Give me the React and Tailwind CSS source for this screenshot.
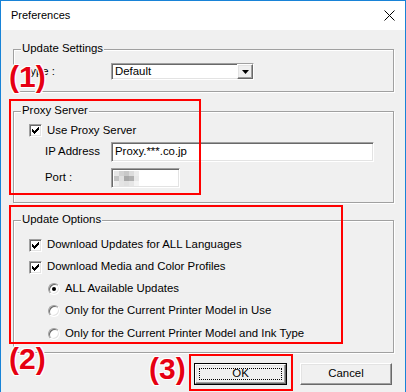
const font = '[font-family:"Liberation_Sans",Arial,sans-serif]';
const sunken =
  'border border-t-[#a0a0a0] border-l-[#a0a0a0] border-r-white border-b-white shadow-[inset_1px_1px_0_#696969,inset_-1px_-1px_0_#e3e3e3] bg-white';
const raised =
  'border border-t-white border-l-white border-r-[#696969] border-b-[#696969] shadow-[inset_-1px_-1px_0_#a0a0a0,inset_1px_1px_0_#e3e3e3] bg-[#f0f0f0]';

const checkCols = [
  [2, 3], [3, 3], [4, 3], [3, 3], [2, 3], [1, 3], [0, 3],
];

function CheckBox() {
  return (
    <div className={`w-[13px] h-[13px] shrink-0 ${sunken} relative`}>
      <svg width="7" height="7" className="absolute left-[2px] top-[2px]" shapeRendering="crispEdges">
        {checkCols.map(([y, h], x) => (
          <rect key={x} x={x} y={y} width="1" height={h} fill="#000" />
        ))}
      </svg>
    </div>
  );
}

function Radio({ on }) {
  return (
    <div className="w-[12px] h-[12px] shrink-0 rounded-full bg-white border border-t-[#a0a0a0] border-l-[#a0a0a0] border-r-white border-b-white shadow-[inset_1px_1px_0_#696969,inset_-1px_-1px_0_#e3e3e3] flex items-center justify-center">
      {on && <div className="w-[4px] h-[4px] rounded-full bg-black" />}
    </div>
  );
}

function Group({ title, className, children }) {
  return (
    <div className={`relative border border-[#a0a0a0] shadow-[1px_1px_0_#fff,inset_1px_1px_0_#fff] w-[381px] ${className}`}>
      <span className="absolute left-[7px] -top-[7px] px-[1px] bg-[#f0f0f0] leading-none">{title}</span>
      {children}
    </div>
  );
}

function Mark({ children, className }) {
  return (
    <span
      className={`absolute text-[30px] leading-none font-bold text-[#e60012] [text-shadow:-1px_-1px_0_#fff,1px_-1px_0_#fff,-1px_1px_0_#fff,1px_1px_0_#fff,0_0_2px_#fff] ${className}`}
    >
      {children}
    </span>
  );
}

export default function App() {
  return (
    <div className={`relative w-[406px] h-[392px] border-x border-t border-[#1883d7] flex flex-col overflow-hidden text-[11.4px] text-black ${font}`}>
      {/* title bar */}
      <div className="h-[29px] bg-white flex items-center justify-between pl-[10px] pr-[10px] shrink-0">
        <span className="text-[11px]">Preferences</span>
        <svg width="11" height="11" viewBox="0 0 11 11">
          <path d="M0.5 0.5L10.5 10.5M10.5 0.5L0.5 10.5" stroke="#000" strokeWidth="1" />
        </svg>
      </div>

      <div className="flex-1 bg-[#f0f0f0] pl-[12px] pt-[19px]">
        <Group title="Update Settings" className="h-[43px] pt-[13px] pl-[10px]">
          <div className="flex items-center">
            <span className="w-[87px]">Type :</span>
            <div className={`w-[143px] h-[17px] ${sunken} flex items-center justify-between`}>
              <span className="pl-[3px]">Default</span>
              <div className={`w-[16px] h-[15px] ${raised} flex items-center justify-center`}>
                <svg width="7" height="4" viewBox="0 0 7 4">
                  <path d="M0 0h7L3.5 4z" fill="#000" />
                </svg>
              </div>
            </div>
          </div>
        </Group>

        <Group title="Proxy Server" className="mt-[19px] h-[92px] pt-[12px] pl-[15px]">
          <div className="flex items-center gap-[5px] h-[13px]">
            <CheckBox />
            <span>Use Proxy Server</span>
          </div>
          <div className="flex items-center mt-[5px] pl-[16px]">
            <span className="w-[66px]">IP Address</span>
            <div className={`w-[263px] h-[20px] ${sunken} flex items-center pl-[3px]`}>Proxy.***.co.jp</div>
          </div>
          <div className="flex items-center mt-[6px] pl-[16px]">
            <span className="w-[66px]">Port :</span>
            <div className={`w-[69px] h-[20px] ${sunken} pl-[1px] pt-[1px]`}>
              <div className="grid grid-cols-[repeat(5,5px)] grid-rows-[repeat(3,5px)] mt-[1px] ml-[1px]">
                <div className="bg-[#e6e6e6]" />
                <div className="bg-[#d2d2d2]" />
                <div className="bg-[#c8c8c8]" />
                <div className="bg-[#dcdcdc]" />
                <div className="bg-[#ececec]" />
                <div className="bg-[#c4c4c4]" />
                <div className="bg-[#e0e0e0]" />
                <div className="bg-[#a8a8a8]" />
                <div className="bg-[#b0b0b0]" />
                <div className="bg-[#e8e8e8]" />
                <div className="bg-[#eeeeee]" />
                <div className="bg-[#e4e4e4]" />
                <div className="bg-[#e0e0e0]" />
                <div className="bg-[#e6e6e6]" />
                <div className="bg-[#f4f4f4]" />
              </div>
            </div>
          </div>
        </Group>

        <Group title="Update Options" className="mt-[17px] h-[133px] pt-[13px] pl-[15px]">
          <div className="flex items-center gap-[5px] h-[22px]">
            <CheckBox />
            <span>Download Updates for ALL Languages</span>
          </div>
          <div className="flex items-center gap-[5px] h-[22px]">
            <CheckBox />
            <span>Download Media and Color Profiles</span>
          </div>
          <div className="pl-[19px]">
            <div className="flex items-center gap-[5px] h-[22px]">
              <Radio on />
              <span>ALL Available Updates</span>
            </div>
            <div className="flex items-center gap-[5px] h-[22px]">
              <Radio />
              <span>Only for the Current Printer Model in Use</span>
            </div>
            <div className="flex items-center gap-[5px] h-[23px]">
              <Radio />
              <span>Only for the Current Printer Model and Ink Type</span>
            </div>
          </div>
        </Group>

        <div className="flex justify-end gap-[13px] pr-[13px] mt-[10px]">
          <button className="w-[93px] h-[22px] border border-black">
            <div className={`w-full h-full ${raised} p-[3px]`}>
              <div className="w-full h-full border border-dotted border-black flex items-center justify-center">OK</div>
            </div>
          </button>
          <button className={`w-[92px] h-[22px] ${raised} flex items-center justify-center`}>Cancel</button>
        </div>
      </div>

      {/* annotations */}
      <div className="absolute left-[8px] top-[98px] w-[192px] h-[96px] border-2 border-[#ff0000]" />
      <div className="absolute left-[8px] top-[204px] w-[334px] h-[139px] border-2 border-[#ff0000]" />
      <div className="absolute left-[188px] top-[353px] w-[104px] h-[37px] border-2 border-[#ff0000]" />
      <Mark className="left-[8px] top-[61px]">(1)</Mark>
      <Mark className="left-[8px] top-[343px]">(2)</Mark>
      <Mark className="left-[148px] top-[353px]">(3)</Mark>
    </div>
  );
}
